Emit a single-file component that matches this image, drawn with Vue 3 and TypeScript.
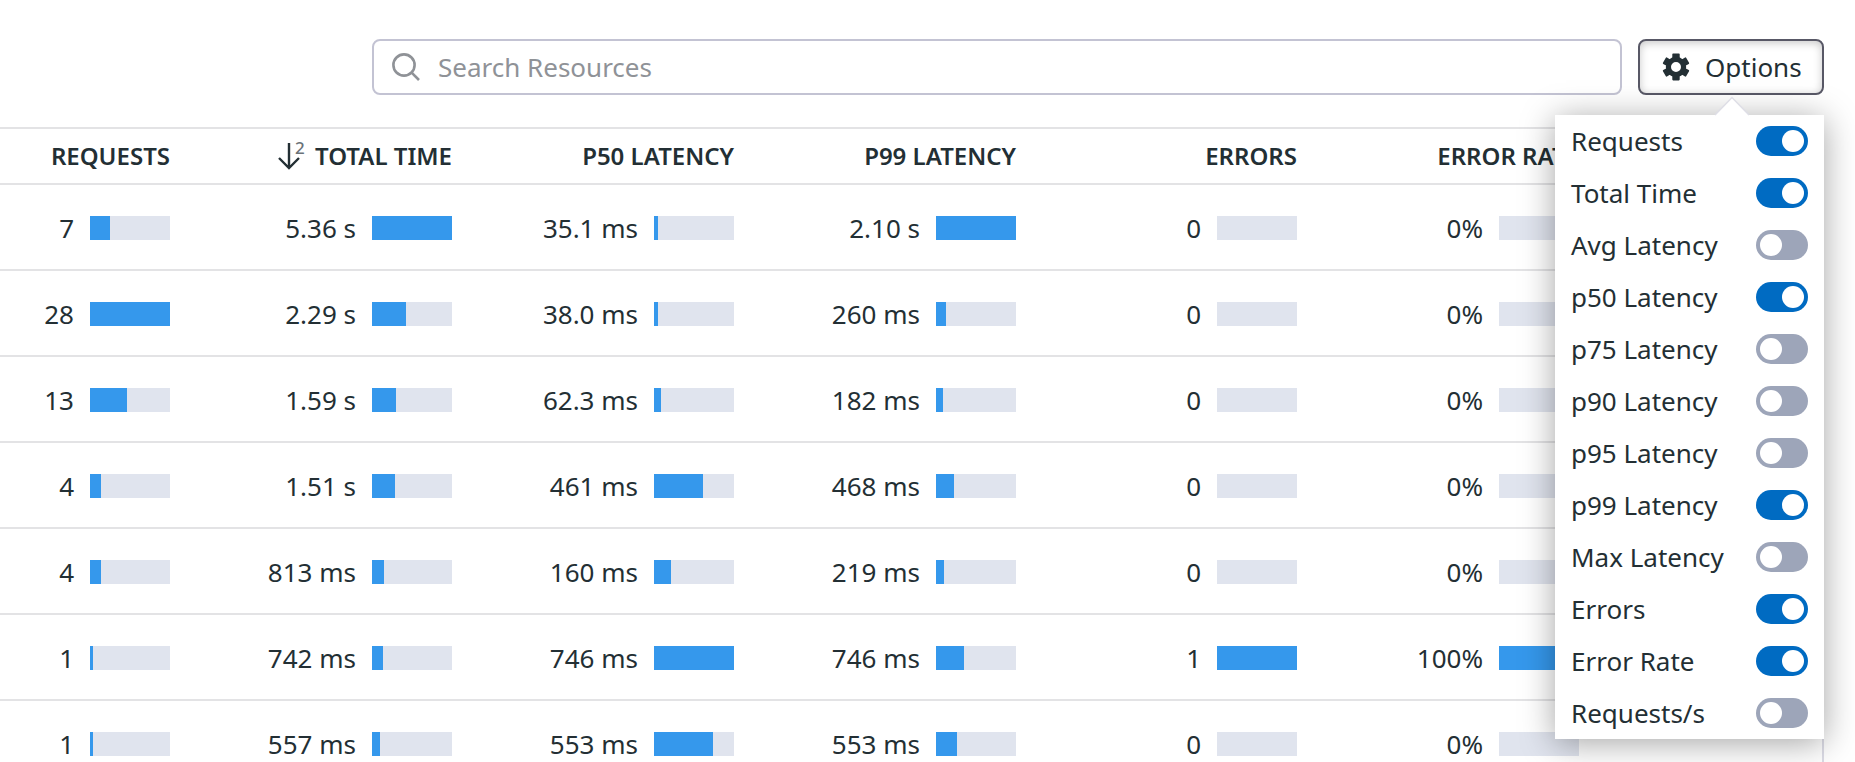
<script setup lang="ts">
interface Cell { text: string; fill: number }
interface Column { label: string; sorted?: boolean; cells: Cell[] }

const c = (text: string, fill: number): Cell => ({ text, fill })

const columns: Column[] = [
  { label: 'REQUESTS', cells: [c('7', 20), c('28', 80), c('13', 37), c('4', 11.4), c('4', 11.4), c('1', 3), c('1', 3)] },
  { label: 'TOTAL TIME', sorted: true, cells: [c('5.36 s', 80), c('2.29 s', 34.2), c('1.59 s', 23.7), c('1.51 s', 22.5), c('813 ms', 12.1), c('742 ms', 11), c('557 ms', 8.3)] },
  { label: 'P50 LATENCY', cells: [c('35.1 ms', 3.8), c('38.0 ms', 4), c('62.3 ms', 6.7), c('461 ms', 49.4), c('160 ms', 17.2), c('746 ms', 80), c('553 ms', 59.3)] },
  { label: 'P99 LATENCY', cells: [c('2.10 s', 80), c('260 ms', 9.9), c('182 ms', 6.9), c('468 ms', 17.8), c('219 ms', 8.3), c('746 ms', 28.4), c('553 ms', 21)] },
  { label: 'ERRORS', cells: [c('0', 0), c('0', 0), c('0', 0), c('0', 0), c('0', 0), c('1', 80), c('0', 0)] },
  { label: 'ERROR RATE', cells: [c('0%', 0), c('0%', 0), c('0%', 0), c('0%', 0), c('0%', 0), c('100%', 80), c('0%', 0)] },
]
const rowIndexes = [0, 1, 2, 3, 4, 5, 6]
const teeth = [0, 60, 120, 180, 240, 300]

const options = [
  { label: 'Requests', on: true },
  { label: 'Total Time', on: true },
  { label: 'Avg Latency', on: false },
  { label: 'p50 Latency', on: true },
  { label: 'p75 Latency', on: false },
  { label: 'p90 Latency', on: false },
  { label: 'p95 Latency', on: false },
  { label: 'p99 Latency', on: true },
  { label: 'Max Latency', on: false },
  { label: 'Errors', on: true },
  { label: 'Error Rate', on: true },
  { label: 'Requests/s', on: false },
]
</script>

<template>
  <div class="page">
    <div class="toolbar">
      <div class="search">
        <svg class="search-icon" viewBox="0 0 28 28">
          <circle cx="12" cy="12" r="10.6" />
          <path d="M19.6 19.6 27 27" />
        </svg>
        <span>Search Resources</span>
      </div>
      <div class="options-anchor">
        <button class="options" type="button">
          <svg class="gear" viewBox="0 0 26 28">
            <circle cx="13" cy="14" r="7.6" />
            <rect v-for="t in teeth" :key="t" x="9.3" y="0.6" width="7.4" height="5.4" rx="0.8" :transform="`rotate(${t} 13 14)`" />
          </svg>
          <span>Options</span>
        </button>
        <div class="popover">
          <svg class="caret" viewBox="0 0 36 20">
            <path class="caret-fill" d="M0 20 18 1 36 20z" />
            <path class="caret-line" d="M1 19 18 1.5 35 19" />
          </svg>
          <div v-for="o in options" :key="o.label" class="option">
            <span>{{ o.label }}</span>
            <span class="toggle" :class="{ on: o.on }"><span class="knob"></span></span>
          </div>
        </div>
      </div>
    </div>

    <div class="table">
      <div class="row head">
        <div v-for="col in columns" :key="col.label" class="cell">
          <svg v-if="col.sorted" class="sort" viewBox="0 -8 28 46">
            <path d="M12 2v25M2 17l10 10 10-10" />
            <text x="18" y="12.5">2</text>
          </svg>
          <span>{{ col.label }}</span>
        </div>
      </div>
      <div v-for="r in rowIndexes" :key="r" class="row">
        <div v-for="col in columns" :key="col.label" class="cell">
          <span>{{ col.cells[r].text }}</span>
          <span class="bar"><span class="fill" :style="{ width: col.cells[r].fill + 'px' }"></span></span>
        </div>
      </div>
    </div>
  </div>
</template>

<style>
body { overflow: hidden; background: #fff; }
</style>

<style scoped>
.page {
  box-sizing: border-box;
  width: 1855px;
  height: 762px;
  padding-top: 39px;
  overflow: hidden;
  font-family: "Noto Sans", sans-serif;
  font-size: 26px;
  line-height: 36px;
  color: #232f34;
}
.toolbar {
  display: flex;
  gap: 16px;
  height: 56px;
  margin: 0 31px 32px 372px;
}
.search {
  box-sizing: border-box;
  flex: 1;
  display: flex;
  align-items: center;
  gap: 18px;
  padding-left: 18px;
  border: 2px solid #c3c3d3;
  border-radius: 8px;
  color: #8f9297;
}
.search-icon {
  width: 28px;
  height: 28px;
  fill: none;
  stroke: #8f9297;
  stroke-width: 2.6;
}
.options-anchor { position: relative; width: 186px; }
.options {
  box-sizing: border-box;
  display: flex;
  align-items: center;
  width: 100%;
  height: 56px;
  padding: 0 0 0 23px;
  gap: 16px;
  border: 2px solid #585866;
  border-radius: 8px;
  background: #fff;
  box-shadow: inset 0 2px 8px rgba(0, 0, 0, 0.22);
  font: inherit;
  color: inherit;
}
.gear { width: 26px; height: 28px; overflow: visible; }
.gear circle { fill: none; stroke: #232f34; stroke-width: 5.2; }
.gear rect { fill: #232f34; }
.popover {
  position: absolute;
  z-index: 2;
  top: 76px;
  right: 0;
  width: 269px;
  background: #fff;
  box-shadow: 0 4px 32px rgba(0, 0, 0, 0.36);
}
.caret { position: absolute; left: 159px; top: -19px; width: 36px; height: 20px; }
.caret-fill { fill: #fff; }
.caret-line { fill: none; stroke: #dedee6; stroke-width: 1.5; }
.option {
  display: flex;
  align-items: center;
  justify-content: space-between;
  height: 52px;
  padding: 0 16px;
}
.toggle {
  box-sizing: border-box;
  display: flex;
  width: 52px;
  height: 30px;
  padding: 4px;
  border-radius: 15px;
  background: #9da5b9;
}
.toggle.on { justify-content: flex-end; background: #006bc2; }
.knob { width: 22px; height: 22px; border-radius: 50%; background: #fff; }
.table {
  box-sizing: border-box;
  width: 1824px;
  height: 700px;
  border-top: 2px solid #e3e3e5;
  border-right: 2px solid #dcdce6;
}
.row {
  box-sizing: border-box;
  display: grid;
  grid-template-columns: 170px 282px 282px 282px 281px 282px;
  height: 86px;
  padding-top: 2px;
  border-bottom: 2px solid #e3e3e5;
}
.head { height: 56px; padding-top: 0; font-size: 24px; font-weight: 600; }
.cell {
  display: flex;
  align-items: center;
  justify-content: flex-end;
  gap: 16px;
  white-space: nowrap;
}
.head .cell { gap: 10px; }
.sort { width: 28px; height: 46px; fill: none; stroke: #232f34; stroke-width: 2.4; }
.sort text { font-size: 17px; font-weight: 500; fill: #6a7278; stroke: none; }
.bar { width: 80px; height: 24px; background: #e0e4ee; }
.fill { display: block; height: 24px; background: #3598ec; }
</style>
